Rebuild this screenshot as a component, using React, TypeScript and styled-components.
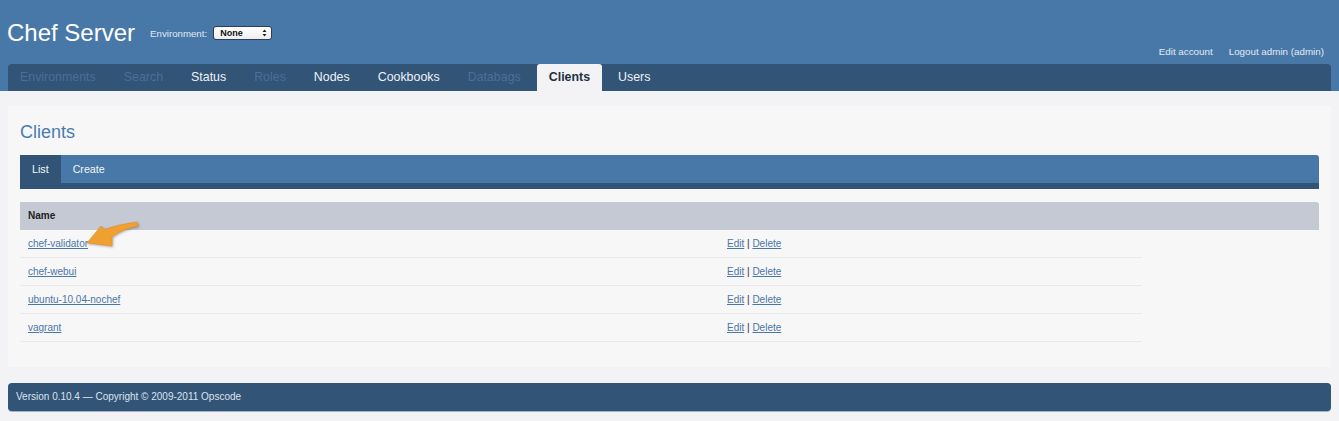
import React from 'react';
import styled, { createGlobalStyle } from 'styled-components';

const GlobalStyle = createGlobalStyle`
  html, body { margin: 0; padding: 0; background: #f3f3f5; }
  body { font-family: "Liberation Sans", Arial, sans-serif; }
  * { box-sizing: border-box; }
`;

const Header = styled.header`
  background: #4878a8;
  display: flex;
  flex-direction: column;
`;

const Masthead = styled.div`
  height: 64px;
  display: flex;
  justify-content: space-between;
  padding: 0 15px 0 7px;
`;

const Brand = styled.div`
  display: flex;
  align-items: center;
  height: 28px;
  margin-top: 19px;
`;

const Title = styled.h1`
  margin: 0;
  font-size: 24px;
  font-weight: normal;
  line-height: 28px;
  color: #ffffff;
`;

const EnvLabel = styled.span`
  margin-left: 15px;
  font-size: 9.7px;
  color: #e3eaf3;
`;

const FakeSelect = styled.div`
  margin-left: 6px;
  width: 59px;
  height: 14px;
  background: linear-gradient(#ffffff, #eeeeee);
  border: 1px solid #2f3f52;
  border-radius: 3px;
  display: flex;
  align-items: center;
  justify-content: space-between;
  padding: 0 4px 0 6px;
  font-size: 9px;
  font-weight: bold;
  color: #111;
`;

const UserLinks = styled.div`
  align-self: flex-end;
  display: flex;
  gap: 16px;
  padding-bottom: 6px;
  font-size: 9.8px;
  line-height: 12px;
`;

const UserLink = styled.a`
  color: #e3eaf3;
  text-decoration: none;
`;

const Nav = styled.nav`
  margin: 0 8px;
  height: 27px;
  background: #325476;
  border-radius: 4px 4px 0 0;
  display: flex;
  gap: 4px;
`;

type TabState = 'active' | 'enabled' | 'disabled';

const Tab = styled.a<{ $state: TabState }>`
  padding: 0 12px;
  line-height: 27px;
  font-size: 12.4px;
  text-decoration: none;
  border-radius: 3px 3px 0 0;
  color: ${(p) => (p.$state === 'active' ? '#1f2f44' : p.$state === 'enabled' ? '#eef2f7' : '#4a6f9a')};
  background: ${(p) => (p.$state === 'active' ? '#f3f3f5' : 'transparent')};
  font-weight: ${(p) => (p.$state === 'active' ? 'bold' : 'normal')};
`;

const Main = styled.main`
  margin: 15px 8px 0;
  background: #f7f7f7;
  padding: 15px 12px 25px;
`;

const Heading = styled.h2`
  margin: 0 0 12px;
  font-size: 18px;
  line-height: 22px;
  font-weight: normal;
  color: #4a7bb0;
`;

const SubNav = styled.div`
  display: flex;
  height: 34px;
  background: #4878a8;
  border-bottom: 6px solid #325476;
  border-radius: 3px 3px 0 0;
`;

const SubTab = styled.a<{ $active?: boolean }>`
  padding: 0 12px;
  line-height: 28px;
  font-size: 10.7px;
  color: #f2f5f9;
  text-decoration: none;
  background: ${(p) => (p.$active ? '#325476' : 'transparent')};
`;

const Table = styled.div`
  margin-top: 13px;
`;

const HeadRow = styled.div`
  height: 28px;
  background: #c5c9d3;
  border-radius: 0 3px 0 0;
  padding: 0 8px;
  font-size: 10px;
  font-weight: bold;
  line-height: 28px;
  color: #222;
`;

const Row = styled.div`
  position: relative;
  width: 1122px;
  height: 28px;
  display: grid;
  grid-template-columns: 699px 1fr;
  border-bottom: 1px solid #e9e9eb;
`;

const Cell = styled.div`
  padding: 0 8px;
  font-size: 10px;
  line-height: 28px;
  color: #333;
`;

const Link = styled.a`
  color: #4a76a8;
  text-decoration: underline;
`;

const Pointer = styled.svg`
  position: absolute;
  left: 64px;
  top: -11px;
  width: 60px;
  height: 32px;
  overflow: visible;
  filter: drop-shadow(1px 1px 1px rgba(0, 0, 0, 0.28));
`;

const Footer = styled.footer`
  margin: 16px 8px 10px;
  height: 28px;
  background: #325476;
  border-radius: 4px;
  box-shadow: 0 1px 0 #a3b6cc;
  padding: 0 8px;
  font-size: 10px;
  line-height: 28px;
  color: #dbe3ec;
`;

const tabs: { label: string; state: TabState }[] = [
  { label: 'Environments', state: 'disabled' },
  { label: 'Search', state: 'disabled' },
  { label: 'Status', state: 'enabled' },
  { label: 'Roles', state: 'disabled' },
  { label: 'Nodes', state: 'enabled' },
  { label: 'Cookbooks', state: 'enabled' },
  { label: 'Databags', state: 'disabled' },
  { label: 'Clients', state: 'active' },
  { label: 'Users', state: 'enabled' },
];

const clients = ['chef-validator', 'chef-webui', 'ubuntu-10.04-nochef', 'vagrant'];

export default function App() {
  return (
    <>
      <GlobalStyle />
      <Header>
        <Masthead>
          <Brand>
            <Title>Chef Server</Title>
            <EnvLabel>Environment:</EnvLabel>
            <FakeSelect>
              <span>None</span>
              <svg width="5" height="8" viewBox="0 0 5 8">
                <path d="M2.5 0.5 L4.5 3 H0.5 Z M2.5 7.5 L0.5 5 H4.5 Z" fill="#222" />
              </svg>
            </FakeSelect>
          </Brand>
          <UserLinks>
            <UserLink href="#">Edit account</UserLink>
            <UserLink href="#">Logout admin (admin)</UserLink>
          </UserLinks>
        </Masthead>
        <Nav>
          {tabs.map((t) => (
            <Tab key={t.label} href="#" $state={t.state}>
              {t.label}
            </Tab>
          ))}
        </Nav>
      </Header>
      <Main>
        <Heading>Clients</Heading>
        <SubNav>
          <SubTab href="#" $active>
            List
          </SubTab>
          <SubTab href="#">Create</SubTab>
        </SubNav>
        <Table>
          <HeadRow>Name</HeadRow>
          {clients.map((c, i) => (
            <Row key={c}>
              <Cell>
                <Link href="#">{c}</Link>
              </Cell>
              <Cell>
                <Link href="#">Edit</Link> | <Link href="#">Delete</Link>
              </Cell>
              {i === 0 && (
                <Pointer viewBox="0 0 60 32">
                  <path
                    d="M3 24 L17 7 L20 10.5 Q36 5 53 3 L54 7 Q38 10 28 18 L28 27 Z"
                    fill="#f0a030"
                    stroke="#e08f1f"
                    strokeWidth="0.6"
                    strokeLinejoin="round"
                  />
                </Pointer>
              )}
            </Row>
          ))}
        </Table>
      </Main>
      <Footer>Version 0.10.4 — Copyright © 2009-2011 Opscode</Footer>
    </>
  );
}
